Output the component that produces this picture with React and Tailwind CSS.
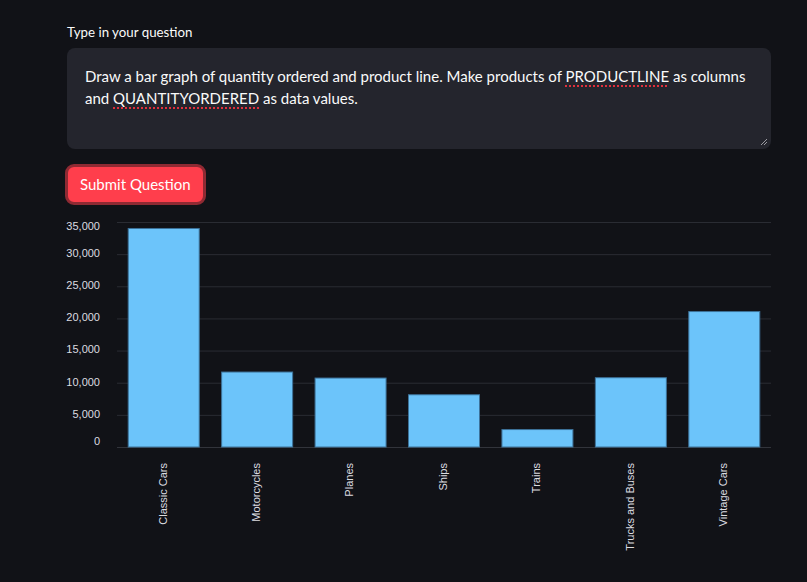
import React from 'react';

const data = [
  { label: 'Classic Cars', value: 33992 },
  { label: 'Motorcycles', value: 11663 },
  { label: 'Planes', value: 10727 },
  { label: 'Ships', value: 8127 },
  { label: 'Trains', value: 2712 },
  { label: 'Trucks and Buses', value: 10777 },
  { label: 'Vintage Cars', value: 21069 },
];

const ticks = [0, 5000, 10000, 15000, 20000, 25000, 30000, 35000];

// Chart geometry (svg coords)
const X0 = 50;
const X1 = 704;
const TOP = 10;
const BASE = 235;
const MAX = 35000;
const yOf = (v) => BASE - (v / MAX) * (BASE - TOP);

const BarChart = () => {
  const band = (X1 - X0) / data.length;
  const barW = 71;

  return (
    <svg
      width="704"
      height="350"
      overflow="visible"
      className="block overflow-visible"
      style={{ fontFamily: '"Liberation Sans", Arial, sans-serif' }}
    >
      {/* Grid */}
      {ticks.map((t) => (
        <g key={t}>
          <line x1={X0} x2={X1} y1={yOf(t) + 0.5} y2={yOf(t) + 0.5} stroke={t === 0 ? '#32343b' : '#2a2c33'} strokeWidth="1" />
          <text
            x={33}
            y={t === 0 ? yOf(t) - 5 : t === MAX ? yOf(t) + 5 : yOf(t)}
            textAnchor="end"
            dominantBaseline="middle"
            fontSize="11"
            fill="#dcdce0"
          >
            {t.toLocaleString('en-US')}
          </text>
        </g>
      ))}

      {/* Bars */}
      {data.map((d, i) => {
        const cx = X0 + band * i + band / 2;
        const y = yOf(d.value);
        return (
          <g key={d.label}>
            <rect
              x={cx - barW / 2}
              y={y}
              width={barW}
              height={BASE - y}
              fill="#6cc4fa"
              stroke="#3d7299"
              strokeWidth="1"
            />
            <text
              transform={`translate(${cx}, ${BASE + 16}) rotate(-90)`}
              textAnchor="end"
              dominantBaseline="middle"
              fontSize="11"
              fill="#dcdce0"
            >
              {d.label}
            </text>
          </g>
        );
      })}
    </svg>
  );
};

const App = () => {
  return (
    <div
      className="min-h-[582px] w-[807px] bg-[#111217] text-[#fafafa]"
      style={{ fontFamily: 'Lato, "Noto Sans", sans-serif' }}
    >
      <div className="ml-[67px] w-[704px] pt-[22px]">
        {/* Label */}
        <div className="h-[20px] text-[13.3px] leading-[20px] text-[#fafafa]">Type in your question</div>

        {/* Textarea */}
        <div className="relative mt-[6px] h-[101px] rounded-[8px] bg-[#24252d] px-[18px] pt-[17px] text-[15px] leading-[22px]">
          Draw a bar graph of quantity ordered and product line. Make products of{' '}
          <span className="underline decoration-dotted decoration-[#e0303c] decoration-2 underline-offset-[3px]">PRODUCTLINE</span>{' '}
          as columns and{' '}
          <span className="underline decoration-dotted decoration-[#e0303c] decoration-2 underline-offset-[3px]">QUANTITYORDERED</span>{' '}
          as data values.
          <svg width="8" height="8" className="absolute bottom-[3px] right-[3px]">
            <line x1="1" y1="7" x2="7" y2="1" stroke="#9a9aa0" strokeWidth="1" />
            <line x1="4" y1="7" x2="7" y2="4" stroke="#9a9aa0" strokeWidth="1" />
          </svg>
        </div>

        {/* Button */}
        <button className="mt-[15px] -ml-[2px] flex h-[41px] items-center rounded-[9px] border-[3px] border-[#8f2a33] bg-[#ff3e4c] px-[12px] text-[15px] text-white">
          Submit Question
        </button>

        {/* Chart */}
        <div className="mt-[7px]">
          <BarChart />
        </div>
      </div>
    </div>
  );
};

export default App;
